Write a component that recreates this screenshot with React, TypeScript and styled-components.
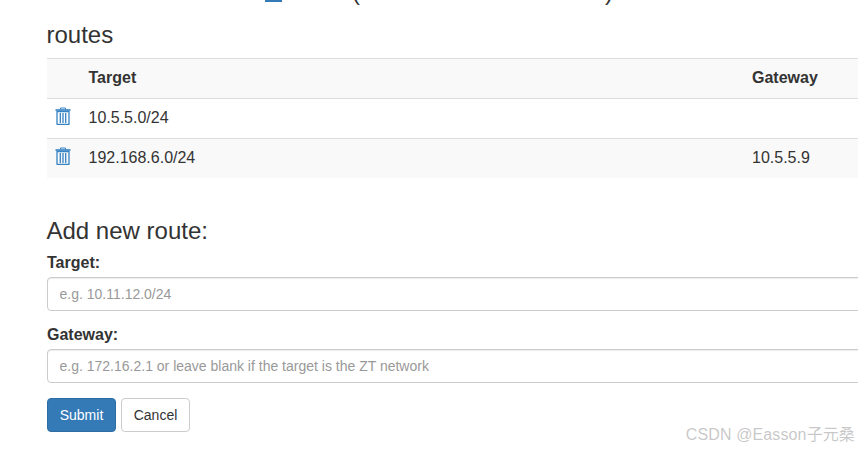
import React from "react";
import styled, { createGlobalStyle } from "styled-components";

const routes = [
  { target: "10.5.5.0/24", gateway: "" },
  { target: "192.168.6.0/24", gateway: "10.5.5.9" },
];

function TrashIcon() {
  return (
    <StyledTrash viewBox="0 0 16 18" width="16" height="18" aria-hidden="true">
      <path d="M5.5 2.5V1h5v1.5" fill="none" stroke="currentColor" strokeWidth="1" />
      <path d="M0.5 3h15" fill="none" stroke="currentColor" strokeWidth="1.6" />
      <path
        d="M2 4.5h12V17a.5.5 0 0 1-.5.5h-11A.5.5 0 0 1 2 17z"
        fill="none"
        stroke="currentColor"
        strokeWidth="1.3"
      />
      <path d="M5.3 6v10M8 6v10M10.7 6v10" fill="none" stroke="currentColor" strokeWidth="1.3" />
    </StyledTrash>
  );
}

export default function App() {
  return (
    <>
      <GlobalStyle />
      <StyledPage>
        <StyledClippedLine>
          <StyledClippedBar />
          <StyledParen $left={305}>(</StyledParen>
          <StyledParen $left={558}>)</StyledParen>
        </StyledClippedLine>

        <StyledHeading>routes</StyledHeading>
        <StyledTable>
          <thead>
            <tr>
              <StyledHeadCell />
              <StyledHeadCell>Target</StyledHeadCell>
              <StyledHeadCell>Gateway</StyledHeadCell>
            </tr>
          </thead>
          <tbody>
            {routes.map((route) => (
              <StyledRow key={route.target}>
                <StyledCell>
                  <TrashIcon />
                </StyledCell>
                <StyledCell>{route.target}</StyledCell>
                <StyledCell>{route.gateway}</StyledCell>
              </StyledRow>
            ))}
          </tbody>
        </StyledTable>

        <StyledFormHeading>Add new route:</StyledFormHeading>
        <form onSubmit={(e) => e.preventDefault()}>
          <StyledField>
            <StyledLabel htmlFor="target">Target:</StyledLabel>
            <StyledInput id="target" placeholder="e.g. 10.11.12.0/24" />
          </StyledField>
          <StyledField>
            <StyledLabel htmlFor="gateway">Gateway:</StyledLabel>
            <StyledInput
              id="gateway"
              placeholder="e.g. 172.16.2.1 or leave blank if the target is the ZT network"
            />
          </StyledField>
          <StyledActions>
            <StyledButton $primary type="submit">
              Submit
            </StyledButton>
            <StyledButton type="button">Cancel</StyledButton>
          </StyledActions>
        </form>

        <StyledWatermark>CSDN @Easson子元桑</StyledWatermark>
      </StyledPage>
    </>
  );
}

const GlobalStyle = createGlobalStyle`
  html, body {
    margin: 0;
    height: 100%;
    overflow: hidden;
    background: #fff;
  }

  body {
    font-family: "Liberation Sans", Arial, "Noto Sans CJK SC", sans-serif;
    font-size: 16px;
    line-height: 20px;
    color: #333;
  }
`;

const StyledPage = styled.div`
  position: relative;
  width: 858px;
  height: 450px;
  padding-left: 47px;
  box-sizing: border-box;
  overflow: hidden;
`;

const StyledClippedLine = styled.div`
  position: absolute;
  top: 0;
  left: 47px;
  width: 600px;
  height: 6px;
  overflow: hidden;
`;

const StyledClippedBar = styled.div`
  position: absolute;
  top: 0;
  left: 218px;
  width: 17px;
  height: 2px;
  background: #337ab7;
`;

const StyledParen = styled.span<{ $left: number }>`
  position: absolute;
  left: ${(p) => p.$left}px;
  top: -20px;
  font-size: 24px;
  line-height: 24px;
  color: #333;
`;

const StyledHeading = styled.h3`
  margin: 0 0 0 -0.5px;
  padding-top: 21px;
  height: 37px;
  font-size: 24px;
  font-weight: 500;
  line-height: 27px;
`;

const StyledTable = styled.table`
  width: 840px;
  border-collapse: separate;
  border-spacing: 0;
  table-layout: fixed;
`;

const StyledHeadCell = styled.th`
  height: 40px;
  padding: 0 8px 2px;
  box-sizing: border-box;
  background: #f9f9f9;
  border-top: 1px solid #ddd;
  font-weight: 700;
  text-align: left;

  &:first-child {
    width: 33.5px;
  }

  &:nth-child(2) {
    width: 663.5px;
  }
`;

const StyledRow = styled.tr`
  &:nth-child(odd) td {
    background: #fff;
  }

  &:nth-child(even) td {
    background: #f9f9f9;
  }
`;

const StyledCell = styled.td`
  height: 40px;
  padding: 0 8px 2px;
  box-sizing: border-box;
  border-top: 1px solid #ddd;
  vertical-align: middle;
`;

const StyledTrash = styled.svg`
  display: block;
  color: #3583c4;
  margin: -4px 0 0 -0.5px;
`;

const StyledFormHeading = styled.h3`
  margin: 0 0 0 -0.5px;
  padding-top: 39px;
  height: 27px;
  font-size: 24px;
  font-weight: 500;
  line-height: 27px;
  box-sizing: content-box;
`;

const StyledField = styled.div`
  margin-bottom: 5px;
`;

const StyledLabel = styled.label`
  display: block;
  margin: 0 0 4px;
  padding-top: 9px;
  font-weight: 700;
  height: 20px;
  line-height: 20px;
`;

const StyledInput = styled.input`
  display: block;
  width: 830px;
  height: 34px;
  padding: 6px 11.5px;
  box-sizing: border-box;
  font-family: inherit;
  font-size: 14px;
  line-height: 20px;
  color: #555;
  background: #fff;
  border: 1px solid #ccc;
  border-radius: 4px;
  box-shadow: inset 0 1px 1px rgba(0, 0, 0, 0.075);

  &::placeholder {
    color: #999;
    opacity: 1;
  }
`;

const StyledActions = styled.div`
  display: flex;
  gap: 5px;
  margin-top: 15px;
`;

const StyledButton = styled.button<{ $primary?: boolean }>`
  width: 69px;
  height: 34px;
  padding: 6px 0;
  font-family: inherit;
  font-size: 14px;
  line-height: 20px;
  color: ${(p) => (p.$primary ? "#fff" : "#333")};
  background: ${(p) => (p.$primary ? "#337ab7" : "#fff")};
  border: 1px solid ${(p) => (p.$primary ? "#2e6da4" : "#ccc")};
  border-radius: 4px;
`;

const StyledWatermark = styled.div`
  position: absolute;
  right: 3px;
  top: 425px;
  font-size: 16px;
  line-height: 20px;
  letter-spacing: 0.12px;
  color: rgba(120, 120, 120, 0.42);
  white-space: nowrap;
`;
